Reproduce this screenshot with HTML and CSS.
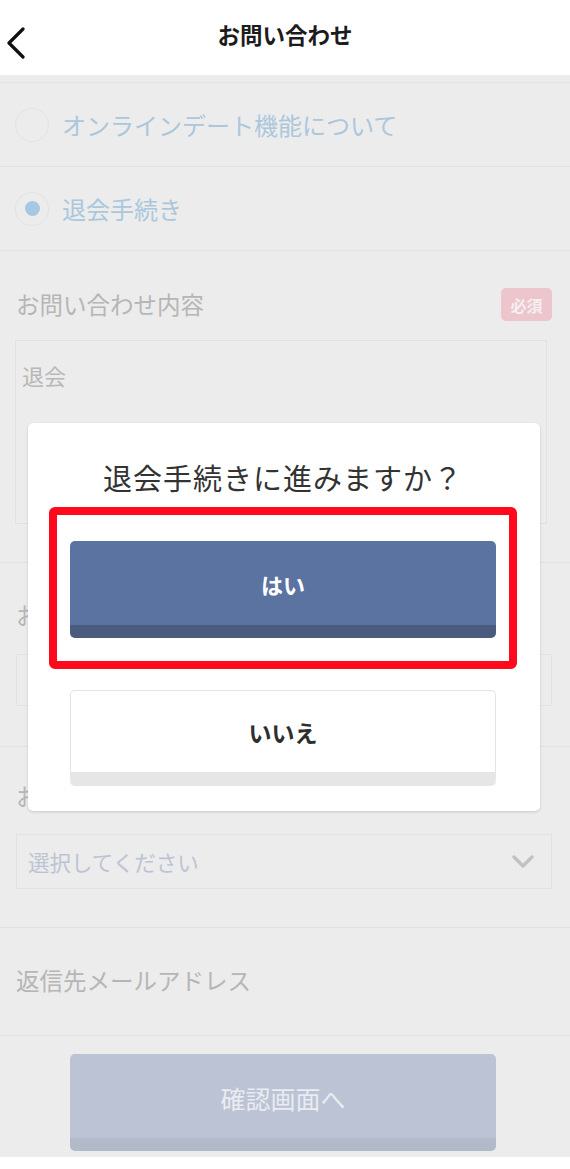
FILE: index.html
```html
<!DOCTYPE html>
<html lang="ja">
<head>
    <meta charset="UTF-8">
    <meta name="viewport" content="width=device-width, initial-scale=1.0">
    <title>お問い合わせ</title>
    <link rel="stylesheet" href="styles.css">
</head>

<body>
    <div class="app">
        <header class="nav">
            <button class="back" aria-label="戻る">
                <svg width="20" height="32" viewBox="0 0 20 32">
                    <polyline points="17,2 3,16 17,30" fill="none" stroke="#111" stroke-width="3.2" stroke-linecap="round" stroke-linejoin="round"/>
                </svg>
            </button>
            <h1>お問い合わせ</h1>
        </header>

        <!-- form behind the dialog, dimmed -->
        <main class="form">
            <div class="radio-list">
                <label class="radio-row">
                    <span class="radio"></span>
                    <span class="radio-text">オンラインデート機能について</span>
                </label>
                <label class="radio-row">
                    <span class="radio checked"></span>
                    <span class="radio-text">退会手続き</span>
                </label>
            </div>

            <section class="field">
                <div class="field-head">
                    <span class="field-label">お問い合わせ内容</span>
                    <span class="required">必須</span>
                </div>
                <div class="textarea">退会</div>
            </section>

            <section class="field">
                <div class="field-head">
                    <span class="field-label">お名前</span>
                </div>
                <div class="input"></div>
            </section>

            <section class="field">
                <div class="field-head">
                    <span class="field-label">お使いの端末</span>
                </div>
                <div class="select">
                    <span>選択してください</span>
                    <svg width="24" height="14" viewBox="0 0 24 14">
                        <polyline points="3,2 12,11 21,2" fill="none" stroke="#c2c2c2" stroke-width="3.4" stroke-linecap="round" stroke-linejoin="round"/>
                    </svg>
                </div>
            </section>

            <section class="field field-mail">
                <div class="field-head">
                    <span class="field-label">返信先メールアドレス</span>
                </div>
            </section>

            <div class="submit-wrap">
                <button class="btn btn-submit">確認画面へ</button>
            </div>
        </main>

        <div class="dialog">
            <p class="dialog-title">退会手続きに進みますか？</p>
            <div class="highlight">
                <button class="btn btn-yes">はい</button>
            </div>
            <button class="btn btn-no">いいえ</button>
        </div>
    </div>
</body>
</html>
```

FILE: styles.css
```css
body, html {
    margin: 0;
    padding: 0;
    background-color: #ffffff;
    font-family: "Noto Sans CJK JP", "Noto Sans", sans-serif;
}

.app {
    position: relative;
    width: 570px;
    min-height: 1169px;
}

.nav {
    height: 75px;
    display: flex;
    align-items: center;
    justify-content: center;
    position: relative;
    background: #ffffff;
}

.nav h1 {
    margin: 0;
    font-size: 22.5px;
    font-weight: bold;
    color: #1c1c1c;
    line-height: 1;
    margin-top: -6px;
}

.back {
    position: absolute;
    left: 6px;
    top: 27px;
    border: none;
    background: none;
    padding: 0;
    display: flex;
}

.form {
    background-color: #ececec;
    padding-top: 7px;
}

.radio-list {
    border-top: 1px solid #e1e1e1;
}

.radio-row {
    height: 83px;
    display: flex;
    align-items: center;
    gap: 13px;
    padding-left: 15px;
    border-bottom: 1px solid #e1e1e1;
}

.radio {
    width: 32px;
    height: 32px;
    border-radius: 50%;
    border: 1px solid #e2e2e2;
    background: #ececec;
    display: flex;
    align-items: center;
    justify-content: center;
}

.radio.checked::after {
    content: "";
    width: 15px;
    height: 15px;
    border-radius: 50%;
    background: #a7c8e0;
}

.radio-text {
    font-size: 24px;
    color: #abc7dc;
    line-height: 1;
}

.field {
    padding: 37px 18px 38px 15px;
    border-bottom: 1px solid #e1e1e1;
}

.field-head {
    height: 33px;
    display: flex;
    align-items: center;
    justify-content: space-between;
    margin-bottom: 19px;
}

.field-label {
    font-size: 23.5px;
    color: #b6b6b6;
    line-height: 1;
    padding-left: 1px;
}

.required {
    width: 51px;
    height: 33px;
    border-radius: 5px;
    background: #ecc5cd;
    color: #f6eef0;
    font-size: 16px;
    font-weight: bold;
    display: flex;
    align-items: center;
    justify-content: center;
}

.textarea {
    height: 184px;
    margin-right: 5px;
    border: 1px solid #e2e2e2;
    padding: 20px 6px 0;
    box-sizing: border-box;
    font-size: 22px;
    color: #b8b8b8;
    line-height: 28px;
}

.field:nth-of-type(2) {
    padding-top: 36px;
    padding-bottom: 40px;
}

.field:nth-of-type(2) .field-head {
    margin-bottom: 22px;
}

.input {
    height: 52px;
    margin-left: 1px;
    border: 1px solid #e2e2e2;
    box-sizing: border-box;
}

.field:nth-of-type(3) {
    padding-top: 33px;
    padding-bottom: 38px;
}

.field:nth-of-type(3) .field-head {
    margin-bottom: 21px;
}

.select {
    height: 55px;
    margin-left: 1px;
    border: 1px solid #e2e2e2;
    box-sizing: border-box;
    display: flex;
    align-items: center;
    justify-content: space-between;
    padding: 0 16px 0 11px;
    font-size: 21.5px;
    color: #bcc4d3;
}

.field-mail {
    padding-top: 36px;
    padding-bottom: 38px;
}

.field-mail .field-head {
    margin-bottom: 0;
}

.submit-wrap {
    padding: 18px 0 6px 70px;
}

.btn {
    display: block;
    width: 426px;
    border: none;
    border-radius: 5px;
    font-family: inherit;
    cursor: pointer;
}

.btn-submit {
    height: 97px;
    background: #bbc3d4;
    border-bottom: 13px solid #b2b9c9;
    color: #e9ecf1;
    font-size: 25px;
    padding-top: 4px;
}

.dialog {
    position: absolute;
    left: 28px;
    top: 423px;
    width: 512px;
    box-sizing: border-box;
    padding: 36px 44px 25px 42px;
    background: #ffffff;
    border-radius: 5px;
    box-shadow: 0 1px 3px rgba(0, 0, 0, 0.16);
}

.dialog-title {
    margin: 0 0 12px;
    text-align: center;
    font-size: 29px;
    line-height: 36px;
    color: #333333;
    letter-spacing: 1px;
}

.highlight {
    margin: 0 -21px;
    padding: 26px 13px 23px;
    border: 8px solid #ff0a1c;
    border-radius: 6px;
}

.btn-yes {
    height: 97px;
    background: #5b73a1;
    border-bottom: 13px solid #4a5b7e;
    color: #ffffff;
    font-size: 22px;
    font-weight: bold;
    padding-top: 3px;
}

.btn-no {
    margin-top: 21px;
    height: 96px;
    background: #ffffff;
    border: 1px solid #e3e3e3;
    border-bottom: 14px solid #e6e6e6;
    color: #2e2e2e;
    font-size: 23px;
    font-weight: bold;
    padding-top: 1px;
}
```
